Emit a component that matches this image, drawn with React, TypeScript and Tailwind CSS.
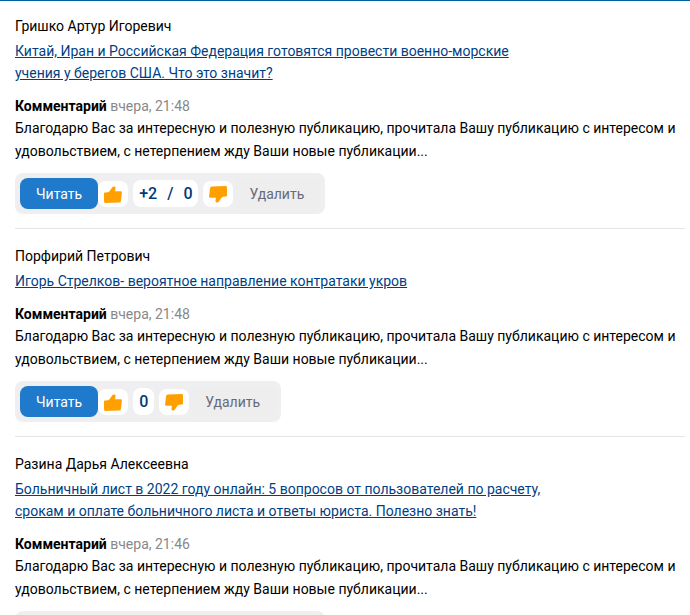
import clsx from "clsx";

interface Comment {
  id: number;
  author: string;
  title: string;
  date: string;
  text: string;
  rating: string[];
}

const text =
  "Благодарю Вас за интересную и полезную публикацию, прочитала Вашу публикацию с интересом и удовольствием, с нетерпением жду Ваши новые публикации...";

const comments: Comment[] = [
  {
    id: 1,
    author: "Гришко Артур Игоревич",
    title:
      "Китай, Иран и Российская Федерация готовятся провести военно-морские учения у берегов США. Что это значит?",
    date: "вчера, 21:48",
    text,
    rating: ["+2", "/", "0"],
  },
  {
    id: 2,
    author: "Порфирий Петрович",
    title: "Игорь Стрелков- вероятное направление контратаки укров",
    date: "вчера, 21:48",
    text,
    rating: ["0"],
  },
  {
    id: 3,
    author: "Разина Дарья Алексеевна",
    title:
      "Больничный лист в 2022 году онлайн: 5 вопросов от пользователей по расчету, срокам и оплате больничного листа и ответы юриста. Полезно знать!",
    date: "вчера, 21:46",
    text,
    rating: ["+2", "/", "0"],
  },
];

const ThumbButton = ({ label, down }: { label: string; down?: boolean }) => (
  <button
    className="mt-px flex h-[26px] w-[30px] items-center justify-center rounded-lg bg-white"
    aria-label={label}
  >
    <svg
      viewBox="0 0 18 17"
      className={clsx("h-[17px] w-[18px] fill-[#ffa000]", down && "rotate-180")}
      aria-hidden="true"
    >
      <path d="M1 6.500 4 6.200Q5 6 5.700 5L8.300 1.300Q9.200.1 10.600.5 11.700.9 11.500 2.200L11.100 5.300H16.700Q18.100 5.300 17.900 6.700L16.900 15Q16.700 16.500 15.300 16.500L1.400 17Q0 17 0 15.600V7.500Q0 6.600 1 6.500Z" />
    </svg>
  </button>
);

const CommentItem = ({ comment }: { comment: Comment }) => (
  <article className="border-b border-[#e5e5e5] pb-3.5">
    <div className="leading-[22px]">{comment.author}</div>
    <div className="mt-[3px] max-w-[540px] leading-[22px]">
      <a href="#" className="text-[#003f85] underline">
        {comment.title}
      </a>
    </div>
    <div className="mt-[11px] leading-[22px]">
      <b>Комментарий</b> <span className="text-[#888]">{comment.date}</span>
    </div>
    <p className="leading-[23px]">{comment.text}</p>
    <div className="mt-2.5 flex w-fit items-center rounded-lg bg-[#efeff1] p-[5px]">
      <button className="h-[31px] rounded-lg bg-[#1f7acb] px-4 text-white">
        Читать
      </button>
      <ThumbButton label="Нравится" />
      <div className="mx-[5px] flex h-[27px] items-center gap-2.5 rounded-lg bg-white px-1.5 text-base font-medium text-[#003a78]">
        {comment.rating.map((part) => (
          <span key={part}>{part}</span>
        ))}
      </div>
      <ThumbButton label="Не нравится" down />
      <button className="h-[31px] rounded-lg bg-[#eee] px-4 text-[#666a7a]">
        Удалить
      </button>
    </div>
  </article>
);

export default function App() {
  return (
    <main className="flex h-screen flex-col gap-4 overflow-hidden border-t border-[#00609c] bg-white pt-3.5 pr-[5px] pl-[15px] font-[Roboto,sans-serif] text-sm text-black">
      {comments.map((comment) => (
        <CommentItem key={comment.id} comment={comment} />
      ))}
    </main>
  );
}
